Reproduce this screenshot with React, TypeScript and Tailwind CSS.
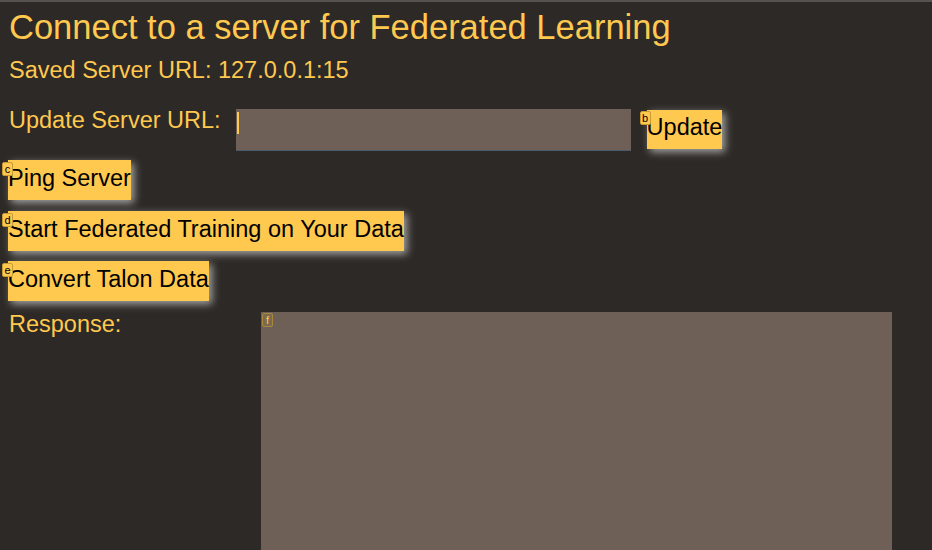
import React from 'react';

const font = { fontFamily: '"Liberation Sans", Arial, sans-serif' };

function Hint({ k, className = '' }: { k: string; className?: string }) {
  return (
    <span
      className={`absolute flex h-[14px] w-[11px] items-center justify-center rounded-[2px] border border-[#c89a32] bg-[#ffc84f] text-[11px] leading-none text-black ${className}`}
    >
      {k}
    </span>
  );
}

function ActionButton({ label, hint }: { label: string; hint: string }) {
  return (
    <div className="relative self-start">
      <Hint k={hint} className="-left-[6px] top-[2px]" />
      <button className="block h-[40px] bg-[#ffc84f] px-0 pb-[4px] text-[23.5px] leading-[normal] text-black shadow-[3px_3px_8px_rgba(210,210,210,0.75)]">
        {label}
      </button>
    </div>
  );
}

export default function App() {
  return (
    <div
      className="flex h-[550px] w-[932px] flex-col overflow-hidden border-t-2 border-[#555350] bg-[#2d2926] pl-[9px] text-[#ffc84f]"
      style={font}
    >
      <h1 className="mt-[6px] text-[34.5px] leading-[normal]">
        Connect to a server for Federated Learning
      </h1>
      <p className="mt-[10px] text-[23.5px] leading-[normal]">
        Saved Server URL: 127.0.0.1:15
      </p>

      <div className="mt-[21px] flex items-start">
        <label className="mt-[2px] text-[23.5px] leading-[normal]">Update Server URL:</label>
        <div className="relative ml-[15px] mt-[4px] h-[42px] w-[395px] border-b border-[#4d5a6e] bg-[#6e6056]">
          <span className="absolute left-[1px] top-[3px] h-[22px] w-[2px] bg-[#ffc84f]" />
        </div>
        <div className="relative ml-[16px] mt-[5px]">
          <Hint k="b" className="-left-[7px] top-[1px]" />
          <button className="block h-[39px] bg-[#ffc84f] px-0 pb-[4px] text-[23.5px] leading-[normal] text-black shadow-[3px_3px_8px_rgba(210,210,210,0.75)]">
            Update
          </button>
        </div>
      </div>

      <div className="-ml-px mt-[9px] flex flex-col gap-[11px]">
        <ActionButton label="Ping Server" hint="c" />
        <ActionButton label="Start Federated Training on Your Data" hint="d" />
        <div className="-mt-px">
          <ActionButton label="Convert Talon Data" hint="e" />
        </div>
      </div>

      <div className="mt-[11px] flex items-start">
        <span className="-mt-px w-[252px] text-[23.5px] leading-[normal]">Response:</span>
        <div className="relative h-[260px] w-[631px] bg-[#6e6056]">
          <span className="absolute left-[1px] top-[1px] flex h-[14px] w-[11px] items-center justify-center rounded-[2px] border border-[#a8873e] bg-[#7d6a4e] text-[11px] leading-none text-[#ffc84f]">
            f
          </span>
        </div>
      </div>
    </div>
  );
}
